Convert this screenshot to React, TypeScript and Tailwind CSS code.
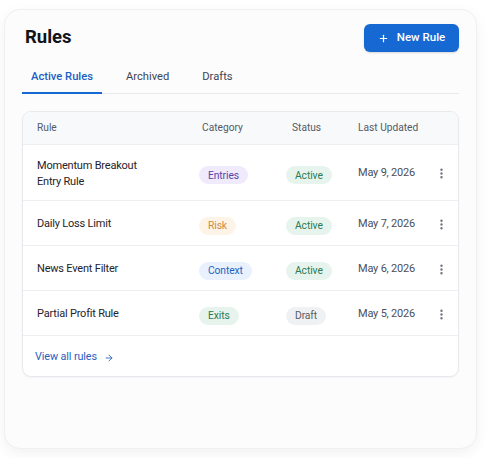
import { Plus, ArrowRight, MoreVertical } from "lucide-react";

type Tone = "purple" | "orange" | "blue" | "green" | "gray";

interface RuleRow {
    name: string[];
    category: string;
    categoryTone: Tone;
    status: string;
    statusTone: Tone;
    updated: string;
}

const toneClasses: Record<Tone, string> = {
    purple: "bg-[#efebfc] text-[#5a43a8]",
    orange: "bg-[#fdf3e6] text-[#cf8a3f]",
    blue: "bg-[#e8f1fd] text-[#2363bd]",
    green: "bg-[#e7f4ed] text-[#2b7a52]",
    gray: "bg-[#f0f1f3] text-[#585d66]",
};

const rules: RuleRow[] = [
    { name: ["Momentum Breakout", "Entry Rule"], category: "Entries", categoryTone: "purple", status: "Active", statusTone: "green", updated: "May 9, 2026" },
    { name: ["Daily Loss Limit"], category: "Risk", categoryTone: "orange", status: "Active", statusTone: "green", updated: "May 7, 2026" },
    { name: ["News Event Filter"], category: "Context", categoryTone: "blue", status: "Active", statusTone: "green", updated: "May 6, 2026" },
    { name: ["Partial Profit Rule"], category: "Exits", categoryTone: "green", status: "Draft", statusTone: "gray", updated: "May 5, 2026" },
];

const Pill = ({ label, tone }: { label: string; tone: Tone }) => (
    <span className={`inline-flex h-[18px] items-center rounded-full px-[9px] text-[10.3px] tracking-[-0.1px] ${toneClasses[tone]}`}>
        {label}
    </span>
);

const tabs = ["Active Rules", "Archived", "Drafts"];

export default function App() {
    return (
        <div className="min-h-screen bg-white pl-[4px] pt-[9px] font-['Roboto',sans-serif]">
            <div className="flex h-[440px] w-[473px] flex-col rounded-[16px] border border-[#eef0f2] bg-[#fcfcfd] px-[17px] pt-[14px] shadow-[0_4px_14px_rgba(15,23,42,0.06)]">
                {/* Header */}
                <div className="flex h-[28px] items-center justify-between">
                    <h1 className="pl-[3px] text-[18.5px] font-bold text-[#111418]">Rules</h1>
                    <button className="flex h-[28px] w-[95px] items-center justify-center gap-[8px] rounded-[6px] bg-[#1668d3] text-[11.5px] font-medium text-white shadow-[0_1px_2px_rgba(0,0,0,0.15)]">
                        <Plus className="h-[11px] w-[11px]" strokeWidth={2.6} />
                        New Rule
                    </button>
                </div>

                {/* Tabs */}
                <div className="mt-[10px] flex gap-[15px] border-b border-[#e7e9ec]">
                    {tabs.map((tab, i) => (
                        <button
                            key={tab}
                            className={`-mb-px h-[32px] border-b-2 px-[9px] pt-[1px] text-[11.2px] ${
                                i === 0
                                    ? "border-[#1668d3] font-medium text-[#1a5fc4]"
                                    : "border-transparent text-[#3f4550]"
                            }`}
                        >
                            {tab}
                        </button>
                    ))}
                </div>

                {/* Table */}
                <div className="mt-[17px] overflow-hidden rounded-[9px] border border-[#e7e9ec] bg-white shadow-[0_1px_2px_rgba(15,23,42,0.04)]">
                    <div className="grid h-[33px] grid-cols-[162px_87px_72px_1fr_16px] items-center border-b border-[#eceef1] bg-[#f8f9fb] pl-[14px] pr-[7px] text-[10.2px] text-[#535a66]">
                        <span>Rule</span>
                        <span className="pl-[3px]">Category</span>
                        <span className="pl-[6px]">Status</span>
                        <span>Last Updated</span>
                        <span />
                    </div>

                    {rules.map((rule, i) => (
                        <div
                            key={rule.updated}
                            className={`grid grid-cols-[162px_87px_72px_1fr_16px] items-center border-b border-[#eceef1] pl-[14px] pr-[7px] pt-[2px] ${
                                i === 0 ? "h-[56px]" : "h-[45px]"
                            }`}
                        >
                            <div className="text-[11px] leading-[16px] tracking-[-0.2px] text-[#1f232a]">
                                {rule.name.map((line) => (
                                    <div key={line}>{line}</div>
                                ))}
                            </div>
                            <div>
                                <Pill label={rule.category} tone={rule.categoryTone} />
                            </div>
                            <div>
                                <Pill label={rule.status} tone={rule.statusTone} />
                            </div>
                            <span className="text-[11px] tracking-[-0.2px] text-[#4a505b]">{rule.updated}</span>
                            <MoreVertical className="h-[13px] w-[13px] text-[#6b7280]" strokeWidth={2.4} />
                        </div>
                    ))}

                    <div className="flex h-[40px] items-center pl-[12px] pt-[3px]">
                        <a href="#" className="flex items-center gap-[7px] text-[10.8px] tracking-[-0.1px] text-[#1f5fc0]">
                            View all rules
                            <ArrowRight className="h-[10px] w-[10px]" strokeWidth={2} />
                        </a>
                    </div>
                </div>
            </div>
        </div>
    );
}
